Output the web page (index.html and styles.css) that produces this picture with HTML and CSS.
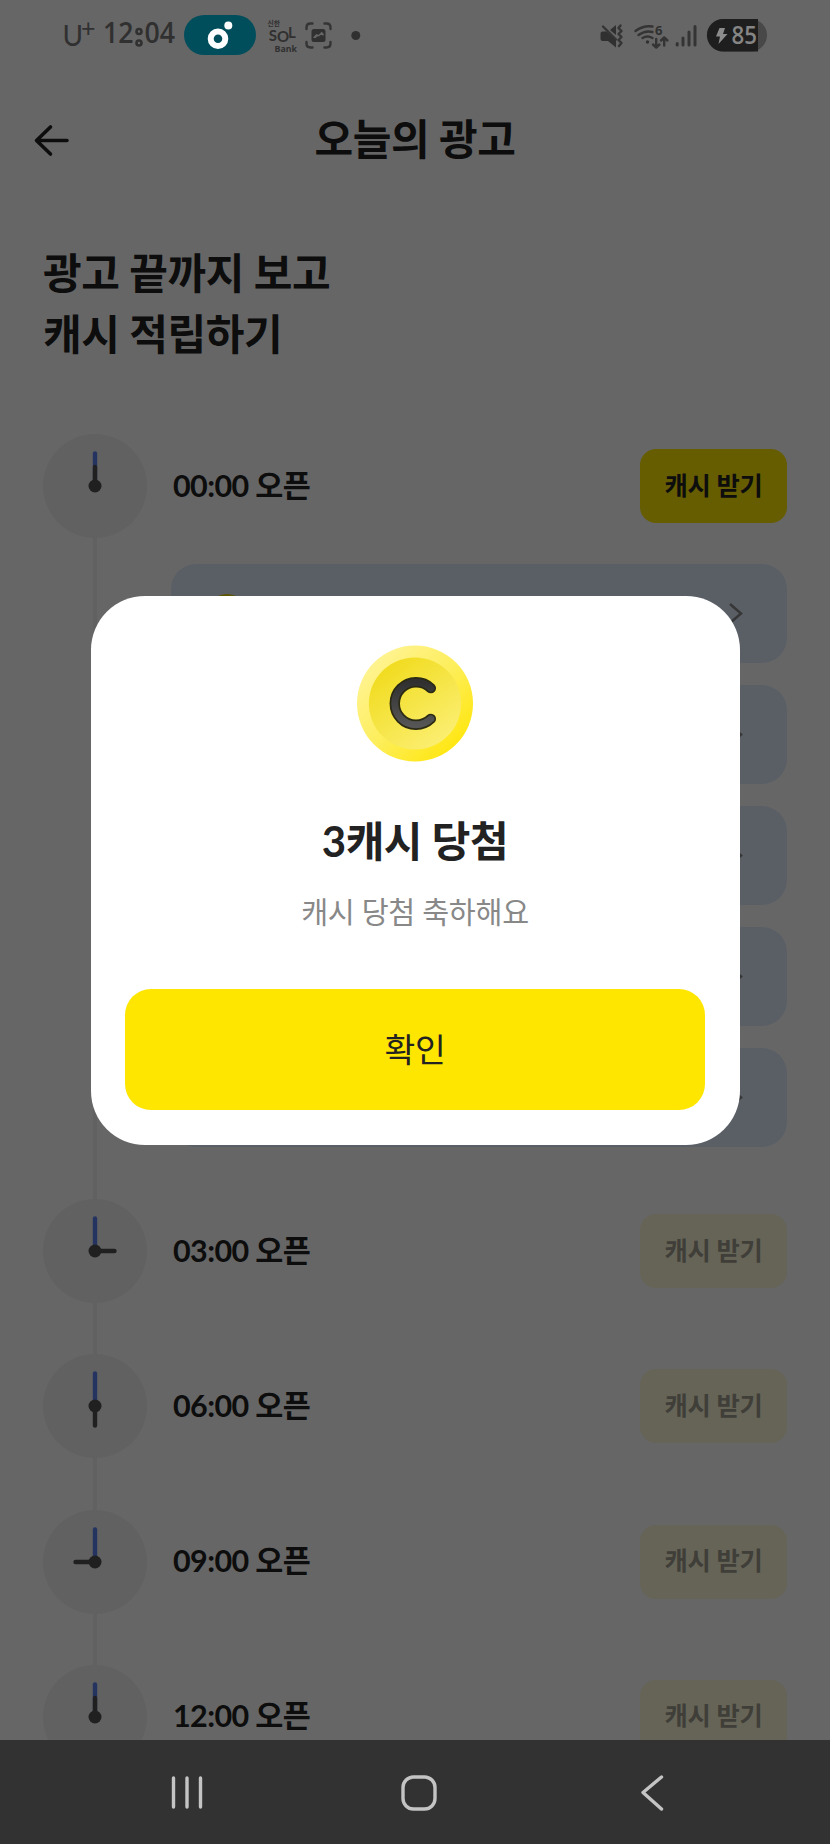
FILE: index.html
```html
<!DOCTYPE html>
<html lang="ko">
<head>
<meta charset="utf-8">
<title>오늘의 광고</title>
<link rel="stylesheet" href="styles.css">
</head>
<body>
<div class="screen">
  <div class="app">
    <div class="status">
      <svg class="status-left" width="330" height="72" viewBox="50 0 330 72">
        <text class="carrier" x="62.500" y="45.500">U</text>
        <text class="plus" x="81" y="36.500">+</text>
        <text class="time" x="103" y="43.200" textLength="30.500" lengthAdjust="spacingAndGlyphs">12</text>
        <circle class="colon" cx="139" cy="31.500" r="2.500"/>
        <circle class="colon" cx="139" cy="43" r="2.500"/>
        <text class="time" x="144.500" y="43.200" textLength="30.500" lengthAdjust="spacingAndGlyphs">04</text>
        <rect class="pill" x="184" y="15" width="72" height="40" rx="20"/>
        <circle class="ring" cx="218" cy="38.800" r="7.300"/>
        <circle class="dot-w" cx="228.300" cy="25.500" r="4"/>
        <text class="sol-top" x="267.500" y="25.500" textLength="12.500" lengthAdjust="spacingAndGlyphs">신한</text>
        <text class="sol" y="40.500"><tspan x="268.700">S</tspan><tspan x="277" dy="1">O</tspan><tspan x="288" dy="-4">L</tspan></text>
        <text class="sol-bank" x="274.500" y="52" textLength="22.500" lengthAdjust="spacingAndGlyphs">Bank</text>
        <path class="ln" d="M306.500 29v-1.500q0-4 4-4h2M324.500 23.500h2q4 0 4 4v1.500M330.500 42v1.500q0 4-4 4h-2M312.500 47.500h-2q-4 0-4-4v-1.500"/>
        <rect class="fl" x="311.500" y="29" width="14" height="13" rx="2.500"/>
        <path class="cut" d="M313.500 38v-1l3-3 2 1 3.200-3.200 2 2v2q-3-2-4.500.5-2.500-.5-3.500 1.700z"/>
        <circle class="fl" cx="355.800" cy="35.500" r="4.500"/>
      </svg>
      <svg class="status-right" width="175" height="72" viewBox="595 0 175 72">
        <path class="fl" d="M600.500 33.500q0-2 2-2h4l9.500 8v8l-8-6.500h-5.500q-2 0-2-2zM610 30l6-5v10z"/>
        <path class="ln" d="M603 26.500l13 13M620.500 25.500l-2 2.500 3 3-3 3 3 3-3 3 3 3-2.500 3"/>
        <path class="ln" d="M635.500 31q8-6 17-4.500M638.500 35q7-5 14-3M642.500 38q5-3 10 0"/>
        <circle class="fl" cx="647.500" cy="42" r="1.700"/>
        <text class="six" x="655" y="34.500">6</text>
        <path class="ln" d="M656.200 39v8M653 44.500l3.200 3 3.200-3M664.200 45.500v-8M661 40.500l3.200-3 3.200 3"/>
        <path class="ln bars" d="M677.200 43.500v1.500M683 38v7M689 32v13M695 26.500v18.500"/>
        <rect class="batt-rest" x="707" y="19" width="60" height="32.500" rx="16.200"/>
        <path class="batt" d="M723.200 19h34.800v32.500h-34.800a16.250 16.250 0 0 1 0-32.500z"/>
        <path class="bolt" d="M719.500 28h5.500l-2 6h4.500l-9 10 1.500-7.500h-4z"/>
        <text class="batt-text" x="731.500" y="43.800" textLength="25.500" lengthAdjust="spacingAndGlyphs">85</text>
      </svg>
    </div>

    <header class="header">
      <svg class="back" width="40" height="40" viewBox="32 120 40 40"><path d="M67 140.500H36.500M50.500 127L36.500 140.500 50.500 154"/></svg>
      <h1 class="title">오늘의 광고</h1>
    </header>

    <h2 class="headline">광고 끝까지 보고<br>캐시 적립하기</h2>

    <main class="timeline">
      <section class="slot open">
        <div class="rail"><svg class="clock" viewBox="0 0 104 104"><circle class="face" cx="52" cy="52" r="52"/><path class="minute" d="M52 52V19.500"/><path class="hour" d="M52 52V33"/><circle class="hub" cx="52" cy="52" r="6.500"/></svg></div>
        <div class="body">
          <div class="row"><span class="when">00:00 오픈</span><button class="claim">캐시 받기</button></div>
          <div class="ads">
            <div class="ad"><span class="mini-coin"></span><svg class="chev" width="16" height="22" viewBox="0 0 16 22"><path d="M2 1L13 10.500 2 20"/></svg></div>
            <div class="ad"><span class="mini-coin"></span><svg class="chev" width="16" height="22" viewBox="0 0 16 22"><path d="M2 1L13 10.500 2 20"/></svg></div>
            <div class="ad"><span class="mini-coin"></span><svg class="chev" width="16" height="22" viewBox="0 0 16 22"><path d="M2 1L13 10.500 2 20"/></svg></div>
            <div class="ad"><span class="mini-coin"></span><svg class="chev" width="16" height="22" viewBox="0 0 16 22"><path d="M2 1L13 10.500 2 20"/></svg></div>
            <div class="ad"><span class="mini-coin"></span><svg class="chev" width="16" height="22" viewBox="0 0 16 22"><path d="M2 1L13 10.500 2 20"/></svg></div>
          </div>
        </div>
      </section>
      <section class="slot">
        <div class="rail"><svg class="clock" viewBox="0 0 104 104"><circle class="face" cx="52" cy="52" r="52"/><path class="minute" d="M52 52V19.500"/><path class="hour" d="M52 52H71.500"/><circle class="hub" cx="52" cy="52" r="6.500"/></svg></div>
        <div class="body"><div class="row"><span class="when">03:00 오픈</span><button class="claim off">캐시 받기</button></div></div>
      </section>
      <section class="slot">
        <div class="rail"><svg class="clock" viewBox="0 0 104 104"><circle class="face" cx="52" cy="52" r="52"/><path class="minute" d="M52 52V19.500"/><path class="hour" d="M52 52V71.500"/><circle class="hub" cx="52" cy="52" r="6.500"/></svg></div>
        <div class="body"><div class="row"><span class="when">06:00 오픈</span><button class="claim off">캐시 받기</button></div></div>
      </section>
      <section class="slot">
        <div class="rail"><svg class="clock" viewBox="0 0 104 104"><circle class="face" cx="52" cy="52" r="52"/><path class="minute" d="M52 52V19.500"/><path class="hour" d="M52 52H32.500"/><circle class="hub" cx="52" cy="52" r="6.500"/></svg></div>
        <div class="body"><div class="row"><span class="when">09:00 오픈</span><button class="claim off">캐시 받기</button></div></div>
      </section>
      <section class="slot">
        <div class="rail"><svg class="clock" viewBox="0 0 104 104"><circle class="face" cx="52" cy="52" r="52"/><path class="minute" d="M52 52V19.500"/><path class="hour" d="M52 52V33"/><circle class="hub" cx="52" cy="52" r="6.500"/></svg></div>
        <div class="body"><div class="row"><span class="when">12:00 오픈</span><button class="claim off">캐시 받기</button></div></div>
      </section>
    </main>
  </div>

  <div class="overlay">
    <div class="modal">
      <svg class="coin" width="117" height="117" viewBox="0 0 118 118">
        <defs>
          <linearGradient id="rim" x1=".15" y1=".15" x2=".85" y2=".85"><stop offset="0" stop-color="#fff38f"/><stop offset=".5" stop-color="#fdee5c"/><stop offset="1" stop-color="#ffe714"/></linearGradient>
          <linearGradient id="plate" x1=".2" y1=".1" x2=".8" y2=".9"><stop offset="0" stop-color="#f1dc20"/><stop offset="1" stop-color="#fbee70"/></linearGradient>
          <linearGradient id="ink" x1="0" y1="0" x2="0" y2="1"><stop offset="0" stop-color="#303030"/><stop offset="1" stop-color="#555"/></linearGradient>
        </defs>
        <circle cx="58.500" cy="59" r="58.500" fill="url(#rim)"/>
        <circle cx="58.500" cy="59" r="46.500" fill="url(#plate)"/>
        <path class="c-edge" d="M74.500 43.500A21.500 21.500 0 1 0 74.500 74.500"/>
        <path class="c-core" d="M74.500 43.500A21.500 21.500 0 1 0 74.500 74.500"/>
      </svg>
      <h3 class="modal-title">3캐시 당첨</h3>
      <p class="modal-sub">캐시 당첨 축하해요</p>
      <button class="ok">확인</button>
    </div>
  </div>

  <nav class="nav">
    <svg width="36" height="36" viewBox="0 0 36 36"><path d="M4.500 3v29M18 3v29M31.500 3v29"/></svg>
    <svg width="36" height="36" viewBox="0 0 36 36"><rect x="2" y="2" width="32" height="32" rx="10.500"/></svg>
    <svg width="36" height="36" viewBox="0 0 36 36"><path d="M27.500 2L9 17.500 27.500 34"/></svg>
  </nav>
</div>
</body>
</html>
```
FILE: styles.css
```css
* { box-sizing: border-box; margin: 0; padding: 0; letter-spacing: -0.01em; }
body { font-family: Lato, "Noto Sans CJK KR", sans-serif; color: #222; background: #fff; }
button { border: 0; font: inherit; color: inherit; }
.screen { position: relative; width: 830px; height: 1844px; overflow: hidden; display: flex; flex-direction: column; }
.app { height: 1740px; overflow: hidden; background: #fff; }

/* system bar stays above the dimmed layer and carries its own colours */
.status { position: relative; z-index: 2; height: 72px; display: flex; justify-content: space-between; padding: 0 60px 0 50px; }
.status text { letter-spacing: 0; fill: #303030; }
.ln { fill: none; stroke: #343434; stroke-width: 2.4; stroke-linecap: round; stroke-linejoin: round; }
.bars { stroke-width: 3; }
.fl { fill: #303030; }
.cut { fill: #666; }
.carrier { font: 400 28px Lato, sans-serif; }
.plus { font: 400 25px Lato, sans-serif; }
.time { font: 600 29px "Open Sans", sans-serif; }
.colon { fill: none; stroke: #303030; stroke-width: 2.600; }
.pill { fill: #004e5c; }
.ring { fill: none; stroke: #fff; stroke-width: 6; }
.dot-w { fill: #fff; }
.sol-top { font: 700 7px "Noto Sans CJK KR", sans-serif; }
.sol { font: 700 15px Lato, sans-serif; }
.sol-bank { font: 700 9px "Open Sans", sans-serif; }
.six { font: 700 13px "Open Sans", sans-serif; }
.batt { fill: #1e1e1e; }
.batt-rest { fill: #484848; }
.bolt { fill: #8c8c8c; }
.status .batt-text { font: 600 26px "Open Sans", sans-serif; fill: #858585; }

.header { height: 136px; display: grid; grid-template-columns: 40px 1fr 40px; align-items: center; padding: 0 32px; }
.back path { fill: none; stroke: #222; stroke-width: 3.6; stroke-linecap: round; stroke-linejoin: round; }
.title { font-size: 42px; line-height: 60px; font-weight: 700; text-align: center; padding-bottom: 2px; }
.headline { font-size: 42px; line-height: 60.500px; font-weight: 700; padding: 35px 43px 0; height: 226px; }

.timeline { padding: 0 43px; }
.slot { display: flex; gap: 26px; height: 155.300px; }
.slot.open { height: 765px; }
.rail { width: 104px; background: linear-gradient(#f2f2f2, #f2f2f2) center / 4px 100% no-repeat; }
.clock { display: block; width: 104px; height: 104px; }
.face { fill: #f2f2f2; }
.minute, .hour { fill: none; stroke-width: 4.4; stroke-linecap: round; }
.minute { stroke: #5b80f0; }
.hour { stroke: #505050; }
.hub { fill: #505050; }
.body { flex: 1; }
.row { display: flex; justify-content: space-between; align-items: center; height: 104px; }
.when { font-size: 30.500px; letter-spacing: -0.02em; font-weight: 700; line-height: 48px; padding-bottom: 3px; }
.claim { width: 147px; height: 74px; padding-bottom: 5px; border-radius: 16px; background: #ffe600; font-size: 25.300px; font-weight: 700; }
.claim.off { background: #fffad9; color: #9e9c8f; }
.ads { display: flex; flex-direction: column; gap: 22px; padding: 26px 0 0; margin-left: -2px; }
.ad { height: 99px; border-radius: 25px; background: #e1eeff; display: flex; align-items: center; justify-content: space-between; padding: 0 43px 0 36px; }
.mini-coin { width: 40px; height: 40px; border-radius: 50%; background: #e8d200; }
.chev path { fill: none; stroke: #888; stroke-width: 2.500; }

.overlay { position: absolute; left: 0; top: 0; width: 830px; height: 1740px; background: rgba(0, 0, 0, .6); display: flex; justify-content: center; align-items: center; }
.modal { width: 649px; height: 549px; border-radius: 54px; background: #fff; display: flex; flex-direction: column; align-items: center; padding: 49px 34px 34.500px; }
.coin { display: block; }
.c-edge { fill: none; stroke: #2b2a12; stroke-width: 10.500; stroke-linecap: round; }
.c-core { fill: none; stroke: url(#ink); stroke-width: 7; stroke-linecap: round; }
.modal-title { font-size: 42px; line-height: 60px; font-weight: 700; margin-top: 49px; }
.modal-sub { font-size: 29.300px; line-height: 46px; color: #888; margin-top: 18px; }
.ok { width: 580px; height: 121px; padding-bottom: 5px; border-radius: 26px; background: #ffe600; font-size: 33.500px; margin-top: auto; }

.nav { height: 104px; background: #323232; display: flex; justify-content: space-between; align-items: center; padding: 2px 160.400px 0 168.600px; }
.nav svg * { fill: none; stroke: #c4c4c4; stroke-width: 3.400; stroke-linecap: round; stroke-linejoin: round; }
```
